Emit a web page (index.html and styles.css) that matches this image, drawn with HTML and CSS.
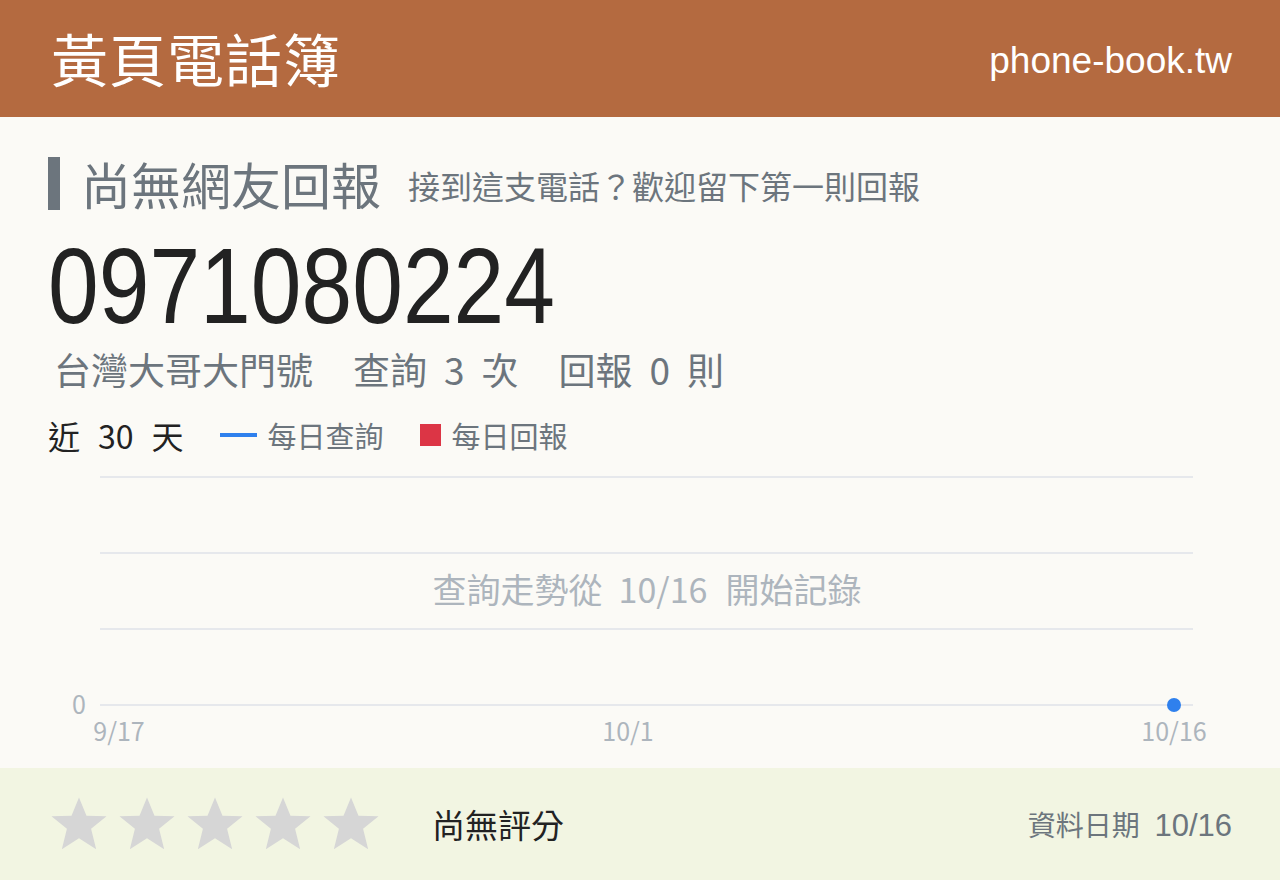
FILE: index.html
```html
<!DOCTYPE html>
<html lang="zh-Hant">
<head>
<meta charset="UTF-8" />
<meta name="viewport" content="width=device-width, initial-scale=1.0"/>
<title>0971080224 - 黃頁電話簿</title>
<link rel="stylesheet" href="styles.css">
</head>
<body>
<header class="topbar">
  <div class="brand">黃頁電話簿</div>
  <div class="domain">phone-book.tw</div>
</header>

<main class="content">
  <div class="status">
    <span class="status-bar"></span>
    <h1 class="status-title">尚無網友回報</h1>
    <span class="status-hint">接到這支電話？歡迎留下第一則回報</span>
  </div>

  <div class="number"><span>0971080224</span></div>

  <div class="meta">
    <span>台灣大哥大門號</span>
    <span>查詢<span class="n">3</span>次</span>
    <span>回報<span class="n">0</span>則</span>
  </div>

  <div class="legend">
    <span class="range">近<span class="n">30</span>天</span>
    <span class="key"><i class="swatch line"></i>每日查詢</span>
    <span class="key"><i class="swatch box"></i>每日回報</span>
  </div>

  <!-- daily lookups chart -->
  <svg class="chart" width="1184" height="300" viewBox="0 0 1184 300">
    <g class="grid">
      <line x1="52" y1="10" x2="1145" y2="10"/>
      <line x1="52" y1="86" x2="1145" y2="86"/>
      <line x1="52" y1="162" x2="1145" y2="162"/>
      <line x1="52" y1="238" x2="1145" y2="238"/>
    </g>
    <text class="axis" x="38" y="247" text-anchor="end">0</text>
    <text class="axis" x="71" y="274" text-anchor="middle">9/17</text>
    <text class="axis" x="580" y="274" text-anchor="middle">10/1</text>
    <text class="axis" x="1126" y="274" text-anchor="middle">10/16</text>
    <text class="notice" x="599" y="136" text-anchor="middle">查詢走勢從<tspan dx="16">10/16</tspan><tspan dx="18">開始記錄</tspan></text>
    <circle class="dot" cx="1126" cy="238" r="7"/>
  </svg>
</main>

<footer class="rating">
  <div class="stars">
    <svg class="star" viewBox="0 0 24 24"><polygon points="12,1 15.1,8.6 23.4,8.8 17,14 19.1,22.4 12,17.9 4.9,22.4 7,14 0.6,8.8 8.9,8.6"/></svg>
    <svg class="star" viewBox="0 0 24 24"><polygon points="12,1 15.1,8.6 23.4,8.8 17,14 19.1,22.4 12,17.9 4.9,22.4 7,14 0.6,8.8 8.9,8.6"/></svg>
    <svg class="star" viewBox="0 0 24 24"><polygon points="12,1 15.1,8.6 23.4,8.8 17,14 19.1,22.4 12,17.9 4.9,22.4 7,14 0.6,8.8 8.9,8.6"/></svg>
    <svg class="star" viewBox="0 0 24 24"><polygon points="12,1 15.1,8.6 23.4,8.8 17,14 19.1,22.4 12,17.9 4.9,22.4 7,14 0.6,8.8 8.9,8.6"/></svg>
    <svg class="star" viewBox="0 0 24 24"><polygon points="12,1 15.1,8.6 23.4,8.8 17,14 19.1,22.4 12,17.9 4.9,22.4 7,14 0.6,8.8 8.9,8.6"/></svg>
  </div>
  <div class="score">尚無評分</div>
  <div class="updated"><span class="label">資料日期</span> 10/16</div>
</footer>
</body>
</html>
```

FILE: styles.css
```css
:root {
  --brand: #b46a40;
  --page-bg: #fbfaf6;
  --footer-bg: #f2f5e2;
  --ink: #222222;
  --muted: #6c757d;
  --faint: #adb5bd;
  --grid: #e6e8ec;
  --blue: #2f80ed;
  --red: #dc3545;
  --cjk: "Noto Sans CJK TC", "Noto Sans", sans-serif;
  --latin: "Liberation Sans", "Noto Sans CJK TC", sans-serif;
}

* {
  box-sizing: border-box;
}

body {
  margin: 0;
  width: 1280px;
  height: 880px;
  background: var(--page-bg);
  color: var(--ink);
  font-family: var(--cjk);
  overflow: hidden;
}

.topbar {
  height: 117px;
  background: var(--brand);
  color: #fff;
  display: flex;
  align-items: center;
  justify-content: space-between;
  padding: 0 48px 0 51px;
}

.brand {
  font-size: 57px;
  line-height: 1;
  letter-spacing: 1px;
  margin-top: -3px;
}

.domain {
  font-family: var(--latin);
  font-size: 37px;
  line-height: 1;
  margin-top: 4px;
}

.content {
  height: 651px;
  padding: 38px 48px 0;
}

.status {
  display: flex;
  align-items: center;
  height: 56px;
}

.status-bar {
  width: 12px;
  height: 53px;
  background: var(--muted);
  margin-right: 21px;
}

.status-title {
  margin: 0;
  font-size: 50px;
  font-weight: 400;
  color: var(--muted);
  line-height: 1;
}

.status-hint {
  margin-left: 27px;
  font-size: 32px;
  color: var(--muted);
  line-height: 1;
  padding-top: 4px;
}

/* narrow the digits so the number sits like a condensed face */
.number {
  font-family: "Liberation Sans", sans-serif;
  font-size: 107px;
  line-height: 1;
  margin-top: 22px;
  height: 100px;
  color: var(--ink);
}

.number span {
  display: inline-block;
  transform: scaleX(0.852);
  transform-origin: left center;
}

.meta {
  display: flex;
  gap: 40px;
  margin-top: 16px;
  padding-left: 6px;
  font-size: 37px;
  line-height: 1.1;
  color: var(--muted);
}

.n {
  margin: 0 17px;
}

.legend {
  display: flex;
  align-items: center;
  margin-top: 25px;
  height: 40px;
}

.range {
  font-size: 32px;
  color: var(--ink);
  margin-right: 36px;
}

.range .n {
  margin: 0 18px;
}

.key {
  display: flex;
  align-items: center;
  font-size: 29px;
  color: var(--muted);
  margin-right: 36px;
}

.swatch {
  display: inline-block;
  margin-right: 11px;
}

.swatch.line {
  width: 37px;
  height: 4px;
  background: var(--blue);
}

.swatch.box {
  width: 21px;
  height: 22px;
  background: var(--red);
}

.chart {
  display: block;
  margin-top: 12px;
}

.grid line {
  stroke: var(--grid);
  stroke-width: 2;
}

.axis {
  font-family: var(--cjk);
  font-size: 25px;
  fill: var(--faint);
}

.notice {
  font-family: var(--cjk);
  font-size: 34px;
  fill: var(--faint);
}

.dot {
  fill: var(--blue);
}

.rating {
  height: 112px;
  background: var(--footer-bg);
  display: flex;
  align-items: center;
  padding: 0 48px 0 50px;
}

.stars {
  display: flex;
  gap: 10px;
}

.star {
  width: 58px;
  height: 58px;
  fill: #d6d6d6;
}

.score {
  margin-left: 52px;
  font-size: 33px;
  color: var(--ink);
}

.updated {
  margin-left: auto;
  font-family: var(--latin);
  font-size: 31px;
  color: var(--muted);
}

.updated .label {
  font-family: var(--cjk);
  font-size: 28px;
  margin-right: 6px;
}
```
